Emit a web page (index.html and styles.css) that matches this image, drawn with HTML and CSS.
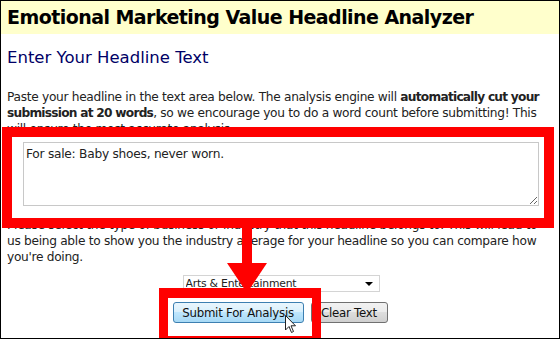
FILE: index.html
```html
<!DOCTYPE html>
<html lang="en">
<head>
    <meta charset="UTF-8">
    <meta name="viewport" content="width=device-width, initial-scale=1.0">
    <title>Headline Analyzer</title>
    <link rel="stylesheet" href="styles.css">
</head>
<body>
    <div class="page">
        <h1 class="title">Emotional Marketing Value Headline Analyzer</h1>
        <div class="content">
            <h2>Enter Your Headline Text</h2>
            <p class="intro">Paste your headline in the text area below. The analysis engine will <b>automatically cut your submission at 20 words</b>, so we encourage you to do a word count before submitting! This will ensure the most accurate analysis.</p>
            <textarea class="headline" name="headline">For sale: Baby shoes, never worn.</textarea>
            <p class="intro">Please select the type of business or industry that this headline belongs to. This will lead to us being able to show you the industry average for your headline so you can compare how you're doing.</p>
            <div class="controls">
                <div class="select-wrap">
                    <select class="industry" name="industry">
                        <option>Arts &amp; Entertainment</option>
                    </select>
                </div>
                <div class="button-group">
                    <button type="button" class="submit-btn">Submit For Analysis</button>
                    <button type="button" class="clear-btn">Clear Text</button>
                </div>
            </div>
        </div>

        <!-- red annotations drawn over the screenshot -->
        <div class="mark mark-textarea"></div>
        <div class="mark mark-button"></div>
        <svg class="arrow" width="44" height="70" viewBox="0 0 44 70">
            <rect x="15" y="0" width="10" height="38" fill="#ff0000"/>
            <polygon points="0,36 40,36 20,66" fill="#ff0000"/>
        </svg>
        <svg class="cursor" width="12" height="19" viewBox="0 0 12 19">
            <path d="M0.5 0.5 L0.5 15 L4 11.5 L6.5 17.5 L8.5 16.5 L6 10.8 L10.5 10.8 Z" fill="#fff" stroke="#222" stroke-width="1"/>
        </svg>
    </div>
</body>
</html>
```

FILE: styles.css
```css
body {
    margin: 0;
    font-family: "DejaVu Sans", Verdana, sans-serif;
    background: #fff;
}
.page {
    position: relative;
    width: 558px;
    height: 337px;
    border: 1px solid #000;
    overflow: hidden;
}
.title {
    margin: 0;
    padding: 6px 6px 7px;
    background-color: #ffffcc;
    font-size: 19px;
    letter-spacing: -0.55px;
    font-weight: bold;
    color: #000;
    height: 20px;
    line-height: 20px;
    white-space: nowrap;
}
.content {
    padding: 0 6px;
}
h2 {
    margin: 14px 0 0;
    font-size: 16.5px;
    font-weight: normal;
    color: #000066;
    line-height: 20px;
}
.intro {
    margin: 21px 0 0;
    font-size: 12.2px;
    letter-spacing: -0.3px;
    line-height: 16px;
    color: #222;
}
.intro b {
    letter-spacing: -0.75px;
}
.headline {
    display: block;
    margin: 5px 0 0 16px;
    width: 516px;
    height: 64px;
    box-sizing: border-box;
    border: 1px solid #c8c8c8;
    padding: 4px 2px;
    font-family: "DejaVu Sans", Verdana, sans-serif;
    font-size: 12.2px;
    letter-spacing: -0.25px;
    color: #222;
    resize: both;
}
.headline + .intro {
    margin-top: 11px;
}
.controls {
    display: flex;
    flex-direction: column;
    align-items: center;
    gap: 10px;
    margin-top: 10px;
}
.select-wrap {
    position: relative;
    width: 197px;
    height: 17px;
    margin-left: 2px;
}
.select-wrap::after {
    content: "";
    position: absolute;
    right: 7px;
    top: 7px;
    border-left: 4px solid transparent;
    border-right: 4px solid transparent;
    border-top: 4px solid #000;
    pointer-events: none;
}
.industry {
    display: block;
    width: 100%;
    height: 100%;
    box-sizing: border-box;
    margin: 0;
    font-family: "DejaVu Sans", Verdana, sans-serif;
    font-size: 10.8px;
    letter-spacing: -0.2px;
    color: #222;
    border: 1px solid #d4d4d4;
    background: #fff;
    padding: 0 2px;
    appearance: none;
    -webkit-appearance: none;
    border-radius: 0;
}
.button-group {
    display: flex;
    gap: 7px;
}
.button-group button {
    height: 21px;
    padding: 0;
    font-family: "DejaVu Sans", Verdana, sans-serif;
    font-size: 11.8px;
    letter-spacing: -0.25px;
    white-space: nowrap;
    color: #111;
    border-radius: 3px;
    cursor: pointer;
}
.submit-btn {
    width: 131px;
    border: 1px solid #3c7fb1;
    background: linear-gradient(#eaf6fd 0%, #d9f0fc 45%, #bee6fd 50%, #a7d9f5 100%);
}
.clear-btn {
    width: 77px;
    border: 1px solid #707070;
    background: linear-gradient(#f2f2f2 0%, #ebebeb 45%, #dddddd 50%, #cfcfcf 100%);
}
.mark {
    position: absolute;
    border: 10px solid #ff0000;
    box-sizing: border-box;
}
.mark-textarea {
    left: 1px;
    top: 126px;
    width: 552px;
    height: 101px;
}
.mark-button {
    left: 158px;
    top: 287px;
    width: 162px;
    height: 58px;
    border-width: 10px 9px;
}
.arrow {
    position: absolute;
    left: 226px;
    top: 226px;
}
.cursor {
    position: absolute;
    left: 284px;
    top: 314px;
}
```
